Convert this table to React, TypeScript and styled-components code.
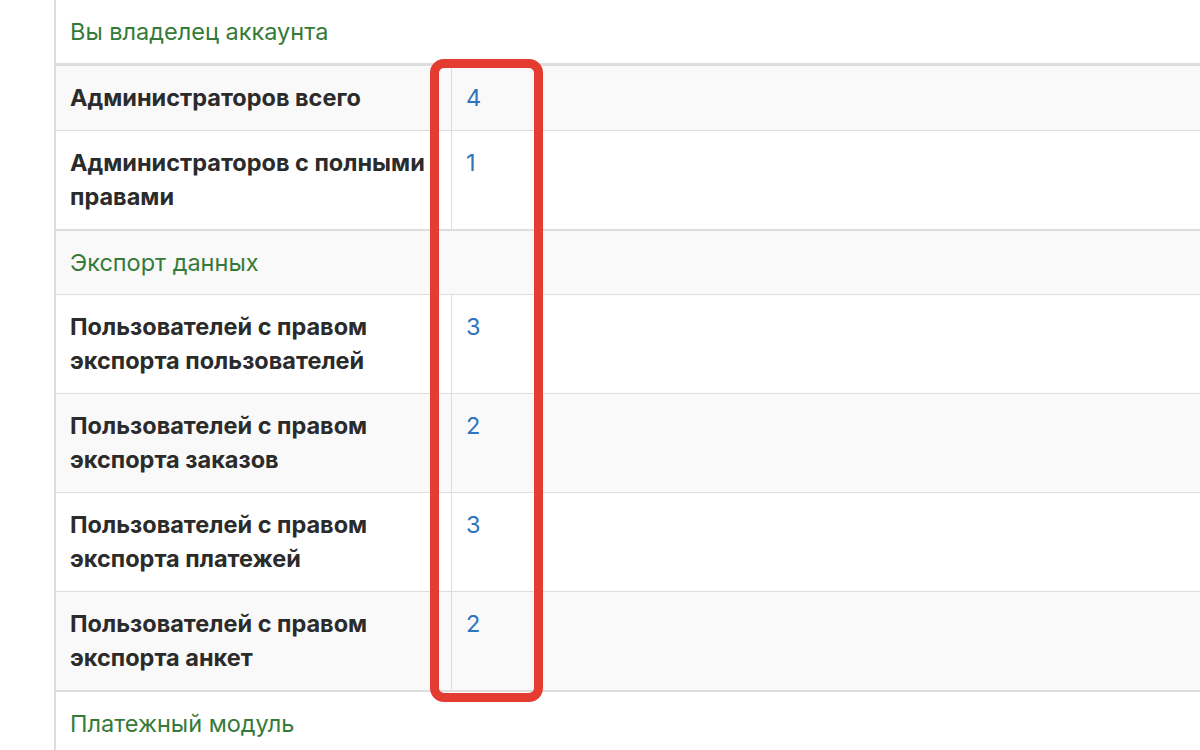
import React from "react";
import styled, { createGlobalStyle } from "styled-components";

const Global = createGlobalStyle`
  html, body { margin: 0; padding: 0; background: #fff; }
  body { font-family: Inter, "Noto Sans", Arial, sans-serif; }
`;

const Page = styled.div`
  padding-left: 54px;
  height: 750px;
  overflow: hidden;
`;

const Frame = styled.div`
  position: relative;
  border-left: 2px solid #dddddd;
  min-height: 750px;
`;

const Table = styled.table`
  width: 100%;
  border-collapse: collapse;
  font-size: 23.5px;
  line-height: 34px;
  color: #2b2b2b;
`;

const Body = styled.tbody<{ $thickHead?: boolean }>`
  & + & { border-top: 2px solid #dddddd; }
  & > tr:first-child { border-top: none; }
  & > tr:nth-child(2) {
    border-top: ${(p) => (p.$thickHead ? "3px" : "1px")} solid #dddddd;
  }
`;

const Row = styled.tr<{ $shade: boolean }>`
  background: ${(p) => (p.$shade ? "#f9f9f9" : "#ffffff")};
  border-top: 1px solid #dddddd;
`;

const SectionCell = styled.td`
  padding: 15px 14px 14px;
  color: #357a38;
  font-weight: 400;
`;

const LabelCell = styled.td`
  width: 367px;
  padding: 15px 14px 15px;
  font-weight: 700;
  vertical-align: top;
`;

const ValueCell = styled.td`
  padding: 15px 14px 15px;
  vertical-align: top;
  color: #2f74bd;
  border-left: 1px solid #dddddd;
`;

const Highlight = styled.div`
  position: absolute;
  left: 374px;
  top: 59px;
  width: 113px;
  height: 643px;
  box-sizing: border-box;
  border: 9px solid #e43c30;
  border-radius: 14px;
  pointer-events: none;
`;

type Item = { label: string; value: string };
type Section = { title: string; items: Item[] };

const sections: Section[] = [
  {
    title: "Вы владелец аккаунта",
    items: [
      { label: "Администраторов всего", value: "4" },
      { label: "Администраторов с полными правами", value: "1" },
    ],
  },
  {
    title: "Экспорт данных",
    items: [
      { label: "Пользователей с правом экспорта пользователей", value: "3" },
      { label: "Пользователей с правом экспорта заказов", value: "2" },
      { label: "Пользователей с правом экспорта платежей", value: "3" },
      { label: "Пользователей с правом экспорта анкет", value: "2" },
    ],
  },
  { title: "Платежный модуль", items: [] },
];

export default function App() {
  let idx = 0;
  return (
    <>
      <Global />
      <Page>
        <Frame>
          <Table>
            {sections.map((s, si) => {
              const headShade = idx++ % 2 === 1;
              return (
                <Body key={s.title} $thickHead={si === 0}>
                  <Row $shade={headShade}>
                    <SectionCell colSpan={2}>{s.title}</SectionCell>
                  </Row>
                  {s.items.map((it) => {
                    const shade = idx++ % 2 === 1;
                    return (
                      <Row key={it.label} $shade={shade}>
                        <LabelCell>{it.label}</LabelCell>
                        <ValueCell>{it.value}</ValueCell>
                      </Row>
                    );
                  })}
                </Body>
              );
            })}
          </Table>
          <Highlight />
        </Frame>
      </Page>
    </>
  );
}
